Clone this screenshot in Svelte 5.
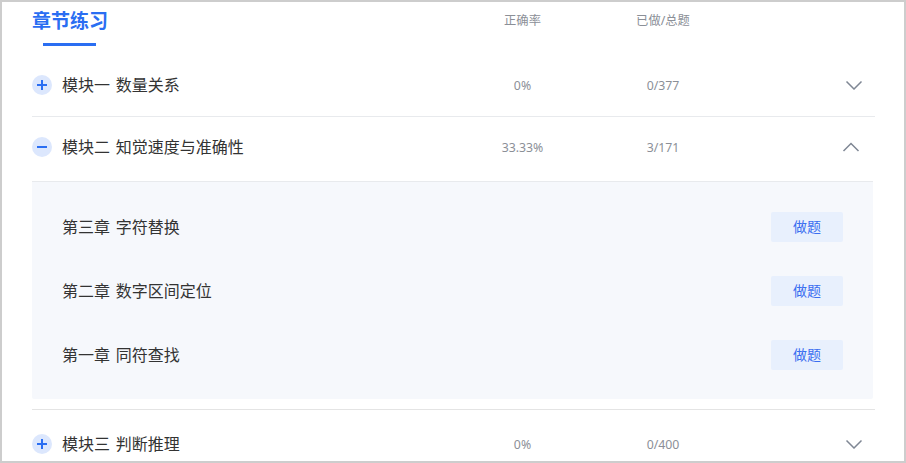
<script>
  const modulos = [
    { nombre: '模块一 数量关系', acierto: '0%', hechas: '0/377', abierto: false },
    {
      nombre: '模块二 知觉速度与准确性',
      acierto: '33.33%',
      hechas: '3/171',
      abierto: true,
      capitulos: ['第三章 字符替换', '第二章 数字区间定位', '第一章 同符查找']
    },
    { nombre: '模块三 判断推理', acierto: '0%', hechas: '0/400', abierto: false }
  ];
</script>

<div class="marco">
  <div class="cabecera">
    <div class="titulo">章节练习</div>
    <div class="col-rate">正确率</div>
    <div class="col-done">已做/总题</div>
  </div>

  {#each modulos as m}
    <div class="modulo" class:abierto={m.abierto}>
      <div class="fila">
        <div class="nombre">
          <span class="toggle">
            <svg width="12" height="12" viewBox="0 0 12 12">
              <path d="M1 6H11" stroke="#2a6ef2" stroke-width="2" />
              {#if !m.abierto}
                <path d="M6 1V11" stroke="#2a6ef2" stroke-width="2" />
              {/if}
            </svg>
          </span>
          <span class="texto">{m.nombre}</span>
        </div>
        <div class="col-rate">{m.acierto}</div>
        <div class="col-done">{m.hechas}</div>
        <div class="flecha">
          <svg width="18" height="10" viewBox="0 0 18 10" fill="none">
            {#if m.abierto}
              <path d="M1.5 9L9 1.5L16.5 9" stroke="#7f8794" stroke-width="1.5" />
            {:else}
              <path d="M1.5 1.5L9 9L16.5 1.5" stroke="#7f8794" stroke-width="1.5" />
            {/if}
          </svg>
        </div>
      </div>

      {#if m.capitulos}
        <div class="panel">
          {#each m.capitulos as c}
            <div class="capitulo">
              <span class="texto">{c}</span>
              <button>做题</button>
            </div>
          {/each}
        </div>
      {/if}
    </div>
  {/each}
</div>

<style>
  :global(body) {
    margin: 0;
    background: #fff;
  }

  .marco {
    box-sizing: border-box;
    width: 906px;
    height: 463px;
    border: 2px solid #cdcdcd;
    padding-left: 30px;
    overflow: hidden;
    font-family: "Noto Sans", "Noto Sans CJK SC", sans-serif;
    color: #333;
  }

  /* Cabecera */
  .cabecera {
    display: flex;
    align-items: flex-start;
    width: 843px;
    height: 52px;
  }

  .titulo {
    width: 75px;
    height: 44px;
    margin-right: 355px;
    position: relative;
    font-size: 19px;
    line-height: 38px;
    font-weight: 700;
    white-space: nowrap;
    color: #2a6ef2;
  }

  .titulo::after {
    content: '';
    position: absolute;
    left: 11px;
    top: 41px;
    width: 53px;
    height: 3px;
    background: #2a6ef2;
  }

  .cabecera .col-rate,
  .cabecera .col-done {
    line-height: 38px;
  }

  .col-rate,
  .col-done {
    font-size: 12.3px;
    text-align: center;
    color: #8b8f97;
  }

  .col-rate {
    width: 121px;
    flex: none;
  }

  .col-done {
    width: 160px;
    flex: none;
  }

  /* Filas */
  .modulo {
    width: 843px;
    border-bottom: 1px solid #e8eaed;
  }

  .modulo:nth-child(3) {
    border-bottom: 1px solid #e4e4e4;
  }

  .modulo:last-child {
    border-bottom: none;
  }

  .fila {
    display: flex;
    align-items: center;
    height: 62px;
  }

  .abierto .fila {
    height: 65px;
    padding-bottom: 4px;
    box-sizing: border-box;
    border-bottom: 1px solid #e8eaed;
    width: 841px;
  }

  .modulo:last-child .fila {
    height: 68px;
  }

  .nombre {
    width: 430px;
    flex: none;
    display: flex;
    align-items: center;
    gap: 10px;
    font-size: 16px;
    word-spacing: 1.5px;
    white-space: nowrap;
  }

  .texto {
    margin-bottom: 2px;
  }

  .toggle {
    width: 20px;
    height: 20px;
    border-radius: 50%;
    background: #dce7fd;
    display: flex;
    align-items: center;
    justify-content: center;
  }

  .flecha {
    margin-left: 102px;
    width: 18px;
    height: 10px;
    display: flex;
  }

  .abierto .flecha {
    margin-left: 99px;
  }

  /* Panel desplegado */
  .panel {
    width: 841px;
    box-sizing: border-box;
    margin-bottom: 10px;
    padding: 13px 30px 12px;
    background: #f6f8fc;
    border-radius: 0 0 2px 2px;
  }

  .capitulo {
    height: 64px;
    display: flex;
    align-items: center;
    justify-content: space-between;
    font-size: 16px;
    word-spacing: 1.5px;
  }

  button {
    width: 72px;
    height: 30px;
    padding: 0 0 2px;
    border: none;
    border-radius: 2px;
    background: #e8f0fd;
    color: #3b6ef0;
    font-family: inherit;
    font-size: 14px;
    cursor: pointer;
  }
</style>
